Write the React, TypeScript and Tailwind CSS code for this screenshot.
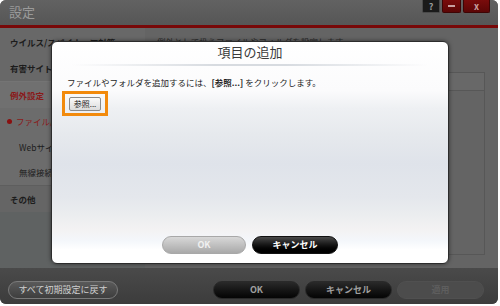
import React from "react";

const jp = { fontFamily: '"Noto Sans CJK JP", "Noto Sans", sans-serif' };

function SideRow({
  label,
  bold,
  red,
  dot,
  indent,
  bg,
}: {
  label: string;
  bold?: boolean;
  red?: boolean;
  dot?: boolean;
  indent?: boolean;
  bg: string;
}) {
  return (
    <div
      className={`h-[26px] flex items-center whitespace-nowrap text-[8.5px] ${bg} ${
        bold ? "font-bold" : ""
      } ${red ? "text-[#8a1a1a]" : "text-[#1c1c1c]"} ${indent ? "pl-[19px]" : "pl-[10px]"}`}
    >
      {dot && (
        <span className="w-[5px] h-[5px] rounded-full bg-[#8a1010] mr-[4px] -ml-[12px]" />
      )}
      {label}
    </div>
  );
}

export default function App() {
  return (
    <div className="w-[500px] h-[306px] bg-white relative overflow-hidden" style={jp}>
      {/* main window */}
      <div className="w-[498px] h-[304px] rounded-[6px] overflow-hidden flex flex-col bg-[#646464]">
        {/* title bar */}
        <div className="h-[25px] flex justify-between bg-gradient-to-b from-[#626262] to-[#565656]">
          <div className="pl-[9px] pt-[4px] text-[13px] leading-[16px] text-[#9a9a9a]">設定</div>
          <div className="flex gap-[2px] mr-[8px] h-[13px]">
            <div className="w-[18px] h-[13px] rounded-b-[2px] bg-[#1a1a1a] border border-t-0 border-[#4a4a4a] flex items-center justify-center text-[9px] font-bold leading-none text-[#9a9a9a]">
              ?
            </div>
            <div className="w-[19px] h-[13px] rounded-b-[2px] bg-gradient-to-b from-[#7a0c0c] to-[#5c0606] border border-t-0 border-[#3e0404] flex items-center justify-center">
              <span className="w-[7px] h-[2px] bg-[#c8a0a0]" />
            </div>
            <div className="w-[27px] h-[13px] rounded-b-[2px] bg-gradient-to-b from-[#7a0c0c] to-[#5c0606] border border-t-0 border-[#3e0404] flex items-center justify-center text-[9px] font-bold leading-none text-[#c8a0a0]">
              x
            </div>
          </div>
        </div>
        <div className="h-[3px] bg-[#780808]" />
        {/* main */}
        <div className="h-[240px] flex">
          <div className="w-[145px] flex flex-col bg-[#696969]">
            <SideRow label="ウイルス/スパイウェア対策" bold bg="bg-[#686868] h-[28px]" />
            <SideRow label="有害サイト/迷惑メール対策" bold bg="bg-[#686868] border-b border-[#747474]" />
            <SideRow label="例外設定" bold red bg="bg-[#707070]" />
            <SideRow label="ファイル/フォルダ" red dot indent bg="bg-[#6c6c6c]" />
            <SideRow label="Webサイト" indent bg="bg-[#6c6c6c]" />
            <SideRow label="無線接続" indent bg="bg-[#6c6c6c] border-b border-[#5e5e5e]" />
            <SideRow label="その他" bold bg="bg-[#656565]" />
            <div className="flex-1 bg-[#5f6262]" />
          </div>
          <div className="flex-1 flex flex-col pl-[12px] pr-[13px] pt-[7px] bg-[#646464]">
            <div className="text-[8.5px] text-[#2a2a2a] whitespace-nowrap leading-[12px]">
              例外として扱うファイルやフォルダを設定します。
            </div>
            <div className="mt-[25px] h-[19px] border border-[#575757] bg-[#686868]" />
            <div className="h-[164px] border border-t-0 border-[#575757]" />
          </div>
        </div>
        {/* bottom bar */}
        <div className="flex-1 flex items-start pt-[13px] pl-[8px] bg-gradient-to-b from-[#4a4a4a] to-[#3c3c3c]">
          <div className="w-[110px] h-[18px] rounded-[9px] border border-[#7a7a7a] bg-gradient-to-b from-[#5a5a5a] to-[#3e3e3e] flex items-center justify-center text-[9px] text-[#cfcfcf]">
            すべて初期設定に戻す
          </div>
          <div className="ml-[95px] flex gap-[5px]">
            <div className="w-[87px] h-[18px] rounded-[9px] border border-[#2a2a2a] bg-gradient-to-b from-[#2a2a2a] to-[#050505] flex items-center justify-center text-[9px] font-bold text-[#a0a0a0]">
              OK
            </div>
            <div className="w-[87px] h-[18px] rounded-[9px] border border-[#2a2a2a] bg-gradient-to-b from-[#2a2a2a] to-[#050505] flex items-center justify-center text-[9px] font-bold text-[#a0a0a0]">
              キャンセル
            </div>
            <div className="w-[87px] h-[18px] rounded-[9px] bg-[#4c4c4c] border border-[#505050] flex items-center justify-center text-[9px] font-bold text-[#5e5e5e]">
              適用
            </div>
          </div>
        </div>
      </div>

      {/* dialog */}
      <div className="absolute left-[51px] top-[41px] w-[398px] h-[223px] rounded-[6px] border border-[#2c2c2c] shadow-[0_0_4px_rgba(0,0,0,0.5)] overflow-hidden flex flex-col bg-[linear-gradient(to_bottom,#ffffff_0%,#fbfbfc_22%,#eef0f3_30%,#e6e9ed_42%,#dfe3ea_55%,#e4e7ec_70%,#ebedef_78%,#f3f2f3_85%,#f4f7fb_90%,#ffffff_94%)]">
        <div className="h-[22px] pt-[1px] flex justify-center text-[13px] leading-[18px] text-[#3a3a3a]">
          項目の追加
        </div>
        <div className="h-[2px] mx-[20px] bg-[linear-gradient(to_right,rgba(220,225,230,0),#d7dbe0_40%,#d7dbe0_60%,rgba(220,225,230,0))]" />
        <div className="pl-[15px] pt-[10px] text-[8.5px] leading-[12px] text-[#1e1e1e] whitespace-nowrap">
          ファイルやフォルダを追加するには、<span className="font-bold">[参照...]</span> をクリックします。
        </div>
        <div className="ml-[10px] mt-[3px] w-[46px] h-[25px] border-[3px] border-[#f28a0c] flex items-center justify-center">
          <div className="w-[32px] h-[14px] rounded-[2px] border border-[#8a8a8a] bg-gradient-to-b from-[#fafafa] to-[#dcdcdc] flex items-center justify-center text-[8px] leading-none text-[#222]">
            参照...
          </div>
        </div>
        <div className="flex-1" />
        <div className="flex justify-center gap-[6px] mb-[9px]">
          <div className="w-[84px] h-[18px] rounded-[9px] border border-[#a8a8a8] bg-gradient-to-b from-[#d8d8d8] to-[#a9a9a9] flex items-center justify-center text-[9px] font-bold text-[#f0f0f0]">
            OK
          </div>
          <div className="w-[86px] h-[18px] rounded-[9px] border border-[#111] bg-gradient-to-b from-[#4a4a4a] via-[#151515] to-[#000] flex items-center justify-center text-[9px] font-bold text-white">
            キャンセル
          </div>
        </div>
      </div>
    </div>
  );
}
